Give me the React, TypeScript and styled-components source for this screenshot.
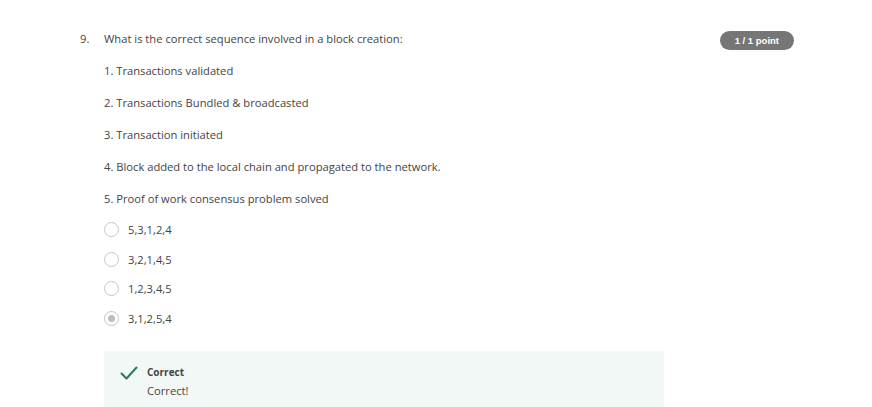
import React from "react";
import styled, { createGlobalStyle } from "styled-components";

const Global = createGlobalStyle`
  html, body { margin: 0; padding: 0; background: #fff; }
  body { font-family: "Open Sans", sans-serif; color: #444; }
`;

const Page = styled.div`
  width: 872px;
  height: 407px;
  overflow: hidden;
  box-sizing: border-box;
  padding: 31px 78px 0 80px;
  display: flex;
`;

const Number = styled.div`
  width: 24px;
  font-size: 11.2px;
  line-height: 16px;
`;

const Body = styled.div`
  flex: 1;
  display: flex;
  flex-direction: column;
`;

const Header = styled.div`
  display: flex;
  justify-content: space-between;
  align-items: flex-start;
`;

const Line = styled.div`
  font-size: 11.2px;
  line-height: 16px;
  margin-bottom: 16px;
`;

const Badge = styled.div`
  background: #767676;
  color: #fff;
  font-family: "Liberation Sans", Arial, sans-serif;
  font-weight: bold;
  font-size: 9.5px;
  height: 19px;
  line-height: 19px;
  padding: 0 15px;
  border-radius: 10px;
`;

const Options = styled.div`
  display: flex;
  flex-direction: column;
  gap: 14.67px;
  margin-top: -1px;
`;

const Option = styled.div`
  display: flex;
  align-items: center;
  gap: 9px;
  height: 15px;
  font-size: 11.2px;
  line-height: 15px;
`;

const Radio = styled.span<{ $checked?: boolean }>`
  flex: none;
  width: 15px;
  height: 15px;
  box-sizing: border-box;
  border: 1.7px solid #c6c6c6;
  border-radius: 50%;
  display: flex;
  align-items: center;
  justify-content: center;
  &::after {
    content: "";
    width: 7px;
    height: 7px;
    border-radius: 50%;
    background: ${(p) => (p.$checked ? "#bdbdbd" : "transparent")};
  }
`;

const Feedback = styled.div`
  margin-top: 25px;
  width: 560px;
  background: #f2f8f6;
  display: flex;
  gap: 9px;
  padding: 14px 0 20px 16px;
  box-sizing: border-box;
`;

const FeedbackText = styled.div`
  display: flex;
  flex-direction: column;
  gap: 4px;
`;

const FeedbackTitle = styled.div`
  font-size: 10px;
  font-weight: 700;
  line-height: 14px;
`;

const FeedbackBody = styled.div`
  font-size: 11.2px;
  line-height: 15px;
`;

const Check = () => (
  <svg width="18" height="16" viewBox="0 0 18 16">
    <path d="M1.5 8.5 L6.5 13.5 L16.5 2.5" fill="none" stroke="#2a7a5a" strokeWidth="2" strokeLinecap="round" strokeLinejoin="round" />
  </svg>
);

const items = [
  "1. Transactions validated",
  "2. Transactions Bundled & broadcasted",
  "3. Transaction initiated",
  "4. Block added to the local chain and propagated to the network.",
  "5. Proof of work consensus problem solved",
];

const options = ["5,3,1,2,4", "3,2,1,4,5", "1,2,3,4,5", "3,1,2,5,4"];

export default function App() {
  return (
    <>
      <Global />
      <Page>
        <Number>9.</Number>
        <Body>
          <Header>
            <Line>What is the correct sequence involved in a block creation:</Line>
            <Badge>1 / 1 point</Badge>
          </Header>
          {items.map((t) => (
            <Line key={t}>{t}</Line>
          ))}
          <Options>
            {options.map((o, i) => (
              <Option key={o}>
                <Radio $checked={i === 3} />
                {o}
              </Option>
            ))}
          </Options>
          <Feedback>
            <Check />
            <FeedbackText>
              <FeedbackTitle>Correct</FeedbackTitle>
              <FeedbackBody>Correct!</FeedbackBody>
            </FeedbackText>
          </Feedback>
        </Body>
      </Page>
    </>
  );
}
